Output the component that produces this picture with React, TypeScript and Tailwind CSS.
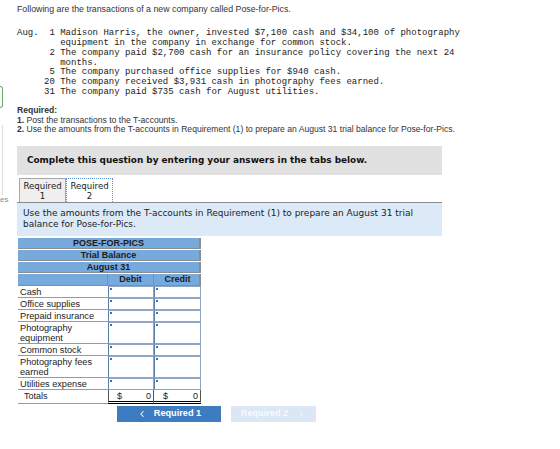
import { ChevronLeft, ChevronRight } from 'lucide-react';

const transactions = `Aug.  1 Madison Harris, the owner, invested $7,100 cash and $34,100 of photography
        equipment in the company in exchange for common stock.
      2 The company paid $2,700 cash for an insurance policy covering the next 24
        months.
      5 The company purchased office supplies for $940 cash.
     20 The company received $3,931 cash in photography fees earned.
     31 The company paid $735 cash for August utilities.`;

interface AccountRow {
  label: string;
  tall?: boolean;
}

const accounts: AccountRow[] = [
  { label: 'Cash' },
  { label: 'Office supplies' },
  { label: 'Prepaid insurance' },
  { label: 'Photography equipment', tall: true },
  { label: 'Common stock' },
  { label: 'Photography fees earned', tall: true },
  { label: 'Utilities expense' },
];

const InputCell = ({ tall }: { tall?: boolean }) => (
  <div className={`relative bg-white border border-[#8ea6c4] border-l-[1.5px] border-l-[#5c7ea6] ${tall ? 'h-[22px]' : 'h-[12px]'}`}>
    <span className="absolute left-[1px] top-[1px] w-[2px] h-[2px] bg-[#3c6fb4]" />
  </div>
);

const TrialBalance = () => {
  const headerRow = 'h-[11px] mb-[1px] bg-[#76a9dc] border-r-2 border-b border-[#8c8c8c] text-center leading-[10px] font-bold text-[9px] text-[#1c1c1c]';

  return (
    <div className="w-[183px] ml-[1px] mt-[2px] font-['Liberation_Sans',Arial,sans-serif]">
      <div className={headerRow}>POSE-FOR-PICS</div>
      <div className={headerRow}>Trial Balance</div>
      <div className={headerRow}>August 31</div>
      <div className="grid grid-cols-[90px_46px_47px] h-[12px] bg-[#76a9dc] border-r-2 border-b border-[#8c8c8c] text-center leading-[11px] font-bold text-[9px] text-[#1c1c1c]">
        <div className="border-r border-[#8c8c8c]" />
        <div className="border-r border-[#8c8c8c]">Debit</div>
        <div>Credit</div>
      </div>
      {accounts.map((row) => (
        <div key={row.label} className="grid grid-cols-[90px_46px_47px]">
          <div className={`border-b border-[#9a9a9a] pl-[2px] pr-[2px] text-[9.2px] leading-[10px] text-[#222] bg-white ${row.tall ? 'h-[22px] pt-[1px]' : 'h-[12px] pt-[1px]'}`}>
            {row.label}
          </div>
          <InputCell tall={row.tall} />
          <InputCell tall={row.tall} />
        </div>
      ))}
      <div className="grid grid-cols-[90px_46px_47px] h-[12px] text-[9px] leading-[10px] text-[#222]">
        <div className="pl-[6px] pt-[1px] border-b border-[#9a9a9a]">Totals</div>
        <div className="flex justify-between px-[8px] pr-[2px] pt-[1px] border-l-[1.5px] border-r border-[#555] border-b-[3px] border-b-black border-double">
          <span>$</span>
          <span>0</span>
        </div>
        <div className="flex justify-between px-[9px] pr-[2px] pt-[1px] border-r border-[#555] border-b-[3px] border-b-black border-double">
          <span>$</span>
          <span>0</span>
        </div>
      </div>
    </div>
  );
};

export default function App() {
  return (
    <div className="w-[560px] h-[449px] bg-white flex overflow-hidden">
      {/* edge of the side panel */}
      <div className="w-[17px] shrink-0 flex flex-col">
        <div className="mt-[86px] w-[3px] h-[22px] rounded-r-[3px] border-[1.5px] border-l-0 border-[#6aa86a]" />
        <div className="mt-[17px] w-[3px] h-[70px] border-r border-[#dcdcdc]" />
        <span className="text-[8px] leading-[10px] text-[#888] font-['Liberation_Sans',Arial,sans-serif]">es</span>
      </div>

      <div className="flex flex-col">
        <p className="pt-[4px] text-[8.8px] leading-[10px] text-[#333] font-['Liberation_Sans',Arial,sans-serif]">
          Following are the transactions of a new company called Pose-for-Pics.
        </p>

        <pre className="mt-[15px] text-[9px] leading-[9.85px] text-[#222] font-['Liberation_Mono','Courier_New',monospace]">
          {transactions}
        </pre>

        <div className="mt-[8px] text-[8.6px] leading-[9.6px] text-[#333] font-['Liberation_Sans',Arial,sans-serif]">
          <p className="font-bold">Required:</p>
          <p>
            <span className="font-bold">1.</span> Post the transactions to the T-accounts.
          </p>
          <p>
            <span className="font-bold">2.</span> Use the amounts from the T-accounts in Requirement (1) to prepare an August 31 trial balance for Pose-for-Pics.
          </p>
        </div>

        <div className="mt-[11px] w-[425px] h-[29px] bg-[#e1e1e1] flex items-center pl-[10px]">
          <span className="font-bold text-[8.9px] text-[#111] font-['DejaVu_Sans',Verdana,sans-serif]">
            Complete this question by entering your answers in the tabs below.
          </span>
        </div>

        <div className="mt-[3px] w-[425px] flex border-b border-[#8a8a8a] font-['DejaVu_Sans',Verdana,sans-serif] text-[8.6px] leading-[10px] text-[#222]">
          <div className="ml-[2px] w-[47px] h-[24px] bg-[#efefef] border border-b-0 border-[#a8a8a8] flex flex-col items-center pt-[2px]">
            <span>Required</span>
            <span>1</span>
          </div>
          <div className="w-[47px] h-[24px] bg-white border border-dotted border-b-0 border-[#5a8fd0] flex flex-col items-center pt-[2px]">
            <span>Required</span>
            <span>2</span>
          </div>
        </div>

        <div className="w-[425px] h-[33px] bg-[#dceaf8] pl-[6px] pt-[5px] text-[9px] leading-[11px] text-[#222] font-['DejaVu_Sans',Verdana,sans-serif]">
          Use the amounts from the T-accounts in Requirement (1) to prepare an August 31 trial
          <br />
          balance for Pose-for-Pics.
        </div>

        <TrialBalance />

        <div className="mt-[4px] ml-[100px] flex gap-[10px] font-['Liberation_Sans',Arial,sans-serif] font-bold text-[9.2px]">
          <button className="w-[104px] h-[16px] bg-[#3d7cc0] text-white flex items-center justify-center gap-[7px]">
            <ChevronLeft size={10} strokeWidth={2.5} />
            <span>Required 1</span>
          </button>
          <button className="w-[85px] h-[16px] bg-[#dbe7f4] text-[#f7fafd] flex items-center justify-center gap-[8px]">
            <span>Required 2</span>
            <ChevronRight size={10} strokeWidth={2} />
          </button>
        </div>
      </div>
    </div>
  );
}
